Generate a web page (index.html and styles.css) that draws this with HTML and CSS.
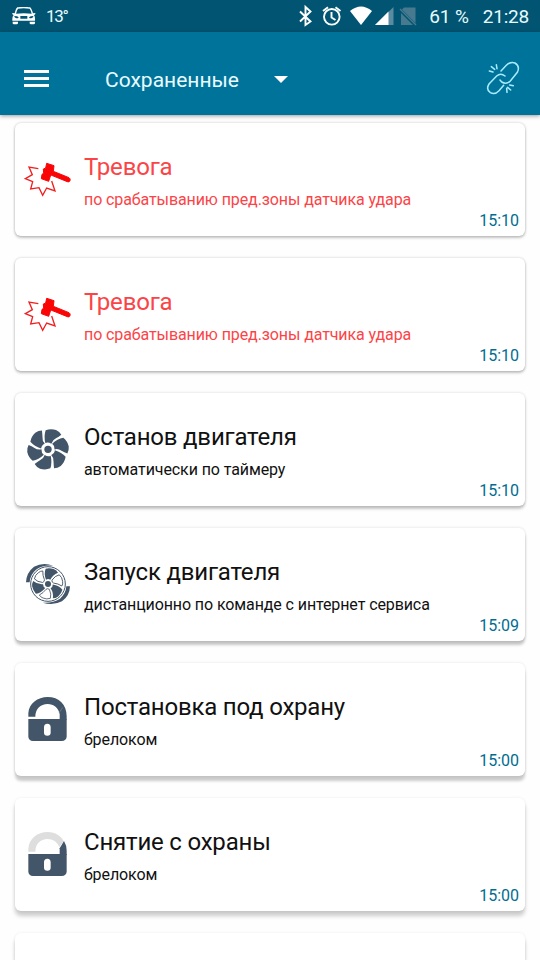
FILE: index.html
```html
<!DOCTYPE html>
<html lang="ru">
<head>
<meta charset="utf-8">
<title>Сохраненные</title>
<link rel="stylesheet" href="styles.css">
</head>
<body>
<svg class="defs" aria-hidden="true">
  <symbol id="hammer" viewBox="0 0 195 180">
    <path d="M70 56 42 51 52 74 31 86 53 95 47 117 72 113 83 136 95 114 120 123 110 93" fill="none" stroke="#f02020" stroke-width="4"/>
    <path d="M95 40 117 47 115 64 162 83Q167 86 165 92Q162 98 157 95L110 76 106 79 101 94 79 86 81 73 86 70 85 57 92 54Z" fill="#fa0505" stroke="#fa0505" stroke-width="3" stroke-linejoin="round"/>
  </symbol>
  <symbol id="fan" viewBox="0 0 195 180">
    <g fill="#435568" transform="translate(99 88)">
      <path id="blade" d="M-8-19Q-13-40-7-57Q8-63 24-58Q35-53 40-44Q32-38 24-33Q13-28 10-17Q0-23-8-19Z"/>
      <use href="#blade" transform="rotate(60)"/>
      <use href="#blade" transform="rotate(120)"/>
      <use href="#blade" transform="rotate(180)"/>
      <use href="#blade" transform="rotate(240)"/>
      <use href="#blade" transform="rotate(300)"/>
      <circle r="11"/>
    </g>
  </symbol>
  <symbol id="fan-run" viewBox="0 0 195 180">
    <g transform="translate(99 87)" fill="#435568">
      <circle r="52" fill="none" stroke="#435568" stroke-width="3"/>
      <path d="M-66-5Q-65-34-42-52Q-15-66 16-55Q-15-58-36-43Q-54-28-55-5ZM66 7Q65 36 42 52Q15 66-16 56Q15 58 36 44Q54 28 55 7Z"/>
      <g>
        <path id="solid-blade" d="M-6-13Q-13-31-7-46Q4-49 17-45Q26-41 30-34Q14-28 7-13Q0-17-6-13Z"/>
        <use href="#solid-blade" transform="rotate(120)"/>
        <use href="#solid-blade" transform="rotate(240)"/>
      </g>
      <g transform="rotate(60)" fill="#fff" stroke="#435568" stroke-width="2.5">
        <path id="open-blade" d="M-4-16Q-11-31-7-43Q4-47 15-42Q23-39 26-33Q14-27 6-16Q2-12-4-16Z"/>
        <use href="#open-blade" transform="rotate(120)"/>
        <use href="#open-blade" transform="rotate(240)"/>
      </g>
      <circle r="9"/>
    </g>
  </symbol>
  <symbol id="lock-body" viewBox="0 0 195 180">
    <path fill="#435568" fill-rule="evenodd" d="M40 87H155V140Q154 152 140 153H54Q41 152 40 140ZM97 101Q87 101 87 112V128Q87 137 97 137Q107 137 107 128V112Q107 101 97 101Z"/>
  </symbol>
  <symbol id="lock" viewBox="0 0 195 180">
    <path fill="#435568" d="M40 80V70C42 40 68 21 98 21C132 21 155 44 155 78V89H134V73C131 53 116 42 98 42C76 42 61 57 61 80Z"/>
    <path d="M132 69 143 52" stroke="#7c8996" stroke-width="2"/>
    <use href="#lock-body" width="195" height="180"/>
  </symbol>
  <symbol id="unlock" viewBox="0 0 195 180">
    <path fill="#dedede" d="M40 80V72C42 40 68 21 98 21C121 21 138 33 146 48L133 67C127 50 113 42 98 42C76 42 61 57 61 80Z"/>
    <path fill="#435568" d="M134 88V70L147 48Q155 61 155 77V90Z"/>
    <use href="#lock-body" width="195" height="180"/>
  </symbol>
</svg>

<div class="status">
  <svg class="car" viewBox="0 0 72 54" width="24" height="18">
    <path fill="#fff" fill-rule="evenodd" d="M16 1Q35-2 54 1Q58 2 63 19L70 18Q71 22 66 24Q70 29 69 41H1Q0 29 5 24Q0 22 1 18L8 19Q12 3 16 1ZM18 5Q15 8 12 20Q35 17 59 20Q56 8 53 5Q35 2 18 5ZM7 27Q7 34 18 34L20 31Q17 27 7 27ZM64 27Q55 27 51 31L53 34Q64 34 64 27ZM25 27V35H46V27ZM2 44H18V49Q17 52 14 52H6Q2 52 2 49ZM53 44H69V49Q68 52 65 52H57Q53 52 53 49Z"/>
  </svg>
  <span class="temp">13°</span>
  <svg class="signals" viewBox="0 0 125 26" width="125" height="26">
    <g fill="none" stroke="#fff" stroke-width="1.9">
      <path d="M5 8.500 15.500 18.500 10.500 22V4L15.500 8.500 5 18.500"/>
      <circle cx="36.800" cy="13.800" r="7.800"/>
      <path d="M36.500 9V14.500L40.500 17M28 8 33 4.300M45.500 8 40.500 4.300"/>
    </g>
    <path fill="#fff" d="M55 8Q66-1 77 8L66 22Z"/>
    <path fill="#5b8ba0" d="M80 22 98.500 4V22Z"/>
    <path fill="#fff" d="M80 22 93.500 8.500V22Z"/>
    <path fill="#477a8f" d="M109 4.500H120.500V20L107 6.500ZM106 10 118 22H106Z"/>
    <path d="M105 6 121 22" stroke="#477a8f" stroke-width="1.500"/>
  </svg>
  <span class="battery">61 %</span>
  <span class="clock">21:28</span>
</div>

<header class="toolbar">
  <div class="menu"><i></i><i></i><i></i></div>
  <div class="title">Сохраненные</div>
  <div class="caret"></div>
  <svg class="link" viewBox="0 0 102 102" width="34" height="34">
    <g fill="none" stroke="#a9ecff" stroke-width="4.500" stroke-linecap="round">
      <path d="M45 30 61 13Q73 1 87 6Q103 16 94 34L73 60Q61 72 47 63L42 57"/>
      <path d="M57 45Q44 34 32 45L9 69Q-1 85 13 95Q27 102 39 89L53 73"/>
      <path d="M10 30 21 33M16 17 26 25M31 11 33 23M71 72 82 74M65 79 74 87M62 82 63 94"/>
    </g>
  </svg>
</header>

<main class="list">
  <article class="card alarm level-1">
    <svg class="icon"><use href="#hammer"/></svg>
    <div class="text"><h2>Тревога</h2><p>по срабатыванию пред.зоны датчика удара</p></div>
    <time>15:10</time>
  </article>
  <article class="card alarm level-2">
    <svg class="icon"><use href="#hammer"/></svg>
    <div class="text"><h2>Тревога</h2><p>по срабатыванию пред.зоны датчика удара</p></div>
    <time>15:10</time>
  </article>
  <article class="card level-3">
    <svg class="icon"><use href="#fan"/></svg>
    <div class="text"><h2>Останов двигателя</h2><p>автоматически по таймеру</p></div>
    <time>15:10</time>
  </article>
  <article class="card level-4">
    <svg class="icon"><use href="#fan-run"/></svg>
    <div class="text"><h2>Запуск двигателя</h2><p>дистанционно по команде с интернет сервиса</p></div>
    <time>15:09</time>
  </article>
  <article class="card level-5">
    <svg class="icon"><use href="#lock"/></svg>
    <div class="text"><h2>Постановка под охрану</h2><p>брелоком</p></div>
    <time>15:00</time>
  </article>
  <article class="card level-6">
    <svg class="icon"><use href="#unlock"/></svg>
    <div class="text"><h2>Снятие с охраны</h2><p>брелоком</p></div>
    <time>15:00</time>
  </article>
  <article class="card peek level-6"></article>
</main>
</body>
</html>
```

FILE: styles.css
```css
* { box-sizing: border-box; }

body {
  margin: 0;
  height: 960px;
  overflow: hidden;
  display: flex;
  flex-direction: column;
  background: #fefefe;
  color: #111;
  font-family: Roboto, sans-serif;
}

.defs { position: absolute; width: 0; height: 0; }

.status {
  flex: none;
  height: 32px;
  display: flex;
  align-items: center;
  padding: 0 11px 0 12px;
  background: #015573;
  color: #e8fbff;
  font-size: 19px;
}
.temp { margin-left: 10px; font-size: 17px; letter-spacing: -1.3px; }
.signals { margin-left: auto; }
.battery { margin-left: 9px; white-space: nowrap; letter-spacing: -0.15px; }
.clock { margin-left: 14px; letter-spacing: -0.2px; }

.toolbar {
  flex: none;
  height: 83px;
  display: flex;
  align-items: center;
  padding: 12px 20px 0 24px;
  background: #00739b;
  color: #e8fbff;
  box-shadow: 0 1px 4px rgba(0, 0, 0, 0.4);
}
.menu { width: 25px; display: grid; gap: 4px; margin-bottom: 2px; }
.menu i { height: 3px; background: #fff; }
.title { margin-left: 56px; font-size: 21px; }
.caret {
  margin-left: 35px;
  border: 7px solid transparent;
  border-top-color: #fff;
  border-bottom: 0;
}
.link { margin: -3px 0 0 auto; }

.list {
  display: flex;
  flex-direction: column;
  gap: 22px;
  padding: 8px 15px 0;
}

.card {
  flex: none;
  height: 113px;
  display: grid;
  grid-template-columns: 65px 1fr;
  grid-template-rows: 86px 27px;
  column-gap: 4px;
  border-radius: 6px;
  background: #fff;
}
.peek { height: 27px; border-radius: 6px 6px 0 0; }
.level-1 { box-shadow: 0 0 3px rgba(0, 0, 0, 0.2), 0 2px 3px rgba(0, 0, 0, 0.2); }
.level-2 { box-shadow: 0 0 3px rgba(0, 0, 0, 0.18), 0 2px 3px rgba(0, 0, 0, 0.22); }
.level-3 { box-shadow: 0 0 3px rgba(0, 0, 0, 0.16), 0 3px 3px rgba(0, 0, 0, 0.22); }
.level-4 { box-shadow: 0 0 3px rgba(0, 0, 0, 0.14), 0 4px 3px rgba(0, 0, 0, 0.22); }
.level-5 { box-shadow: 0 0 3px rgba(0, 0, 0, 0.1), 0 5px 3px rgba(0, 0, 0, 0.2); }
.level-6 { box-shadow: 0 0 3px rgba(0, 0, 0, 0.07), 0 5px 4px rgba(0, 0, 0, 0.2); }

.icon { width: 65px; height: 60px; margin-top: 27px; }
.text { padding-top: 29px; white-space: nowrap; }
h2 { margin: 0; font-size: 24px; line-height: 30px; font-weight: 400; letter-spacing: -0.2px; }
p { margin: 8px 0 0; font-size: 16px; line-height: 20px; letter-spacing: -0.1px; }
.alarm { color: #fb4447; }
time {
  grid-column: 2;
  justify-self: end;
  padding: 1px 6px 0 0;
  font-size: 16px;
  line-height: 22px;
  color: #016c91;
}
```
